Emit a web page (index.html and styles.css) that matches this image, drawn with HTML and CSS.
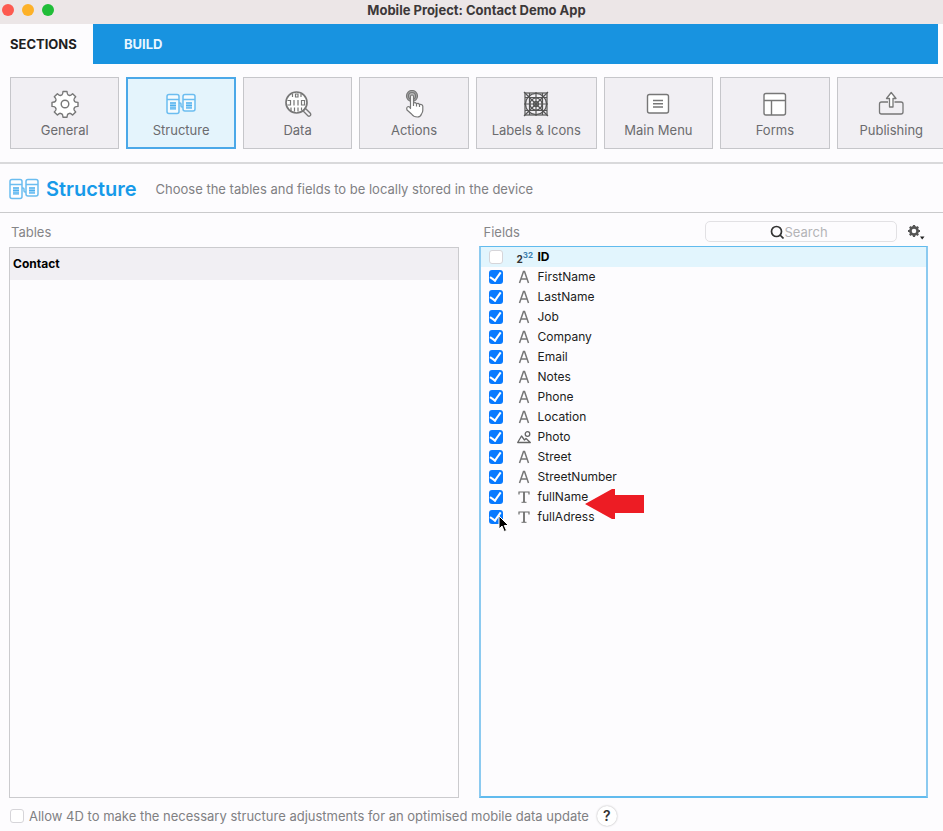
FILE: index.html
```html
<!DOCTYPE html>
<html lang="en">
<head>
<meta charset="utf-8">
<title>Mobile Project: Contact Demo App</title>
<link rel="stylesheet" href="styles.css">
</head>
<body>
<svg class="defs" aria-hidden="true">
  <symbol id="structure" viewBox="0 0 30 22">
    <g fill="#fff" fill-opacity=".6" stroke="#6bbdf0" stroke-width="1.5">
      <rect x="1" y="1.500" width="12" height="19" rx="2"/>
      <rect x="17" y="1.500" width="12" height="16.500" rx="2"/>
      <path d="M1 6.500h12M17 6.500h12M13 10h1q1 0 1 1v2q0 1 1 1h1" fill="none"/>
    </g>
    <path d="M4 9h6v8H4zM20 9h6v6.500h-6z" fill="#9bd3f6"/>
    <path d="M4 10h6M4 12.500h6M4 15h6M20 10h6M20 12.500h6M20 15h6" stroke="#4fb0ee" stroke-width="1"/>
  </symbol>
  <symbol id="letter" viewBox="0 0 14 14">
    <path d="M2.500 13 6.500 1.500h1L11.500 13M4 9h6" fill="none" stroke="#777" stroke-width="1.500"/>
  </symbol>
  <symbol id="text" viewBox="0 0 14 14">
    <path d="M2 4.500V2h10v2.500" fill="none" stroke="#6d6d6d" stroke-width="1.200"/>
    <path d="M7 2v10" stroke="#6d6d6d" stroke-width="1.800"/>
    <path d="M4.500 12.300h5" stroke="#6d6d6d"/>
  </symbol>
</svg>

<header class="titlebar">
  <span class="lights"><i class="light red"></i><i class="light amber"></i><i class="light green"></i></span>
  <h1>Mobile Project: Contact Demo App</h1>
</header>

<nav class="tabs">
  <button class="tab active">SECTIONS</button>
  <button class="tab build">BUILD</button>
</nav>

<nav class="toolbar">
  <button class="tool">
    <svg width="28" height="28" viewBox="0 0 28 28" fill="#fff" stroke="#777" stroke-width="1.400" stroke-linejoin="round"><path d="M12 1.500h4q.3 3 1 3.300l1.700.7q.7.300 2.900-1.800l3.100 3.100q-2.100 2.200-1.800 2.900l.7 1.700q.3.700 3.400 1v4q-3.100.3-3.400 1l-.7 1.700q-.3.700 1.800 2.900l-3.100 3.100q-2.200-2.100-2.900-1.800l-1.700.7q-.7.300-1 3.300h-4q-.3-3-1-3.300l-1.700-.7q-.7-.3-2.900 1.800l-3.100-3.100q2.100-2.200 1.800-2.900l-.7-1.700q-.3-.7-3.400-1v-4q3.100-.3 3.400-1l.7-1.700q.3-.7-1.800-2.900l3.100-3.100q2.200 2.100 2.900 1.800l1.700-.7q.7-.3 1-3.300z"/><circle cx="14" cy="14" r="3.800"/></svg>
    <span>General</span>
  </button>
  <button class="tool selected">
    <svg width="30" height="28" viewBox="0 -3 30 28"><use href="#structure" width="30" height="22"/></svg>
    <span>Structure</span>
  </button>
  <button class="tool">
    <svg width="28" height="28" viewBox="0 0 28 28" fill="none" stroke="#777" stroke-width="1.300"><circle cx="12.500" cy="12.500" r="10.500" fill="#fff" stroke-width="1.700"/><path d="m20 20 1.500-1.500 5 5q.7 1.500-.4 2.300t-2 .2l-5-5z"/><path d="M8.500 3.500v3.500M17 3.500v3.500M11.500 4h2.500v3h-2.500zM3.500 10.500h3V15h-3M10 10v5.500M14 10v5.500M17.500 10.500h3V15h-3zM7 17.500v3.500M10.500 17.500v4M14 17.500v4M17.500 17.500v3" stroke-width="1.200"/></svg>
    <span>Data</span>
  </button>
  <button class="tool">
    <svg width="28" height="28" viewBox="0 0 28 28" stroke="#777" stroke-width="1.200"><circle cx="12" cy="6" r="5.500" fill="#aaa"/><circle cx="12" cy="6" r="3.500" fill="#bbb"/><path d="M10.500 17V6.500a1.500 1.500 0 0 1 3 0V13q2-1 3 .8 2-1 3 .8 3-.7 3.300 1.700v4q0 2-1.300 3.700-1 3-4 3-4 0-6-3L7 20q-1-3 1.500-3.500 1 0 2 2z" fill="#fff" stroke-linejoin="round"/><path d="M13.500 13v3M16.500 14v2.500M19.500 15v2" fill="none"/></svg>
    <span>Actions</span>
  </button>
  <button class="tool">
    <svg width="28" height="28" viewBox="0 0 28 28" fill="none" stroke="#555" stroke-width="1.200"><rect x="3" y="3" width="22" height="22"/><path d="M7.500 3v22M14 2v24M20.500 3v22M3 7.500h22M2 14h24M3 20.500h22M2 2l24 24M26 2 2 26"/><circle cx="14" cy="14" r="10.500"/><circle cx="14" cy="14" r="6"/><circle cx="14" cy="14" r="2.500"/></svg>
    <span>Labels &amp; Icons</span>
  </button>
  <button class="tool">
    <svg width="28" height="28" viewBox="0 0 28 28" fill="#fff" stroke="#777" stroke-width="1.400"><rect x="3.500" y="4.500" width="21" height="18.500" rx="2"/><path d="M9 10.500h10M9 13.800h10M9 17h10"/></svg>
    <span>Main Menu</span>
  </button>
  <button class="tool">
    <svg width="28" height="28" viewBox="0 0 28 28" fill="#fff" stroke="#777" stroke-width="1.400"><rect x="3" y="3.500" width="21.500" height="21.500" rx="2"/><path d="M3 10.500h21.500M10.500 10.500V25"/></svg>
    <span>Forms</span>
  </button>
  <button class="tool">
    <svg width="28" height="28" viewBox="0 0 28 28" fill="none" stroke="#777" stroke-width="1.300" stroke-linejoin="round"><path d="M11 12H4.500q-2 0-2 2v8q0 2 2 2h19.500q2 0 2-2v-8q0-2-2-2h-6.500"/><path d="M12.500 17V8.500h-3L14.200 2.500 19 8.500h-3V17z" fill="#fff"/></svg>
    <span>Publishing</span>
  </button>
</nav>

<section class="heading">
  <svg width="30" height="22"><use href="#structure"/></svg>
  <h2>Structure</h2>
  <p>Choose the tables and fields to be locally stored in the device</p>
</section>

<main class="panels">
  <section class="column">
    <div class="column-head"><h3>Tables</h3></div>
    <ul class="list tables"><li class="table-row">Contact</li></ul>
  </section>
  <section class="column">
    <div class="column-head field-head">
      <h3>Fields</h3>
      <label class="search">
        <svg width="14" height="14" viewBox="0 0 14 14" fill="none" stroke="#333" stroke-width="1.700"><circle cx="6.500" cy="6.500" r="5"/><path d="m10 10 3.500 3.500"/></svg>
        <input type="text" placeholder="Search" aria-label="Search fields">
      </label>
      <button class="options" aria-label="Field options">
        <svg width="18" height="18" viewBox="0 0 18 18"><circle cx="7" cy="8" r="3.600" fill="none" stroke="#555" stroke-width="2.600"/><path d="M7 2v2M7 12v2M1 8h2M11 8h2M2.800 3.800l1.400 1.400M9.800 10.800l1.400 1.400M2.800 12.200l1.400-1.400M9.800 5.200l1.400-1.400" stroke="#555" stroke-width="2.200"/><path d="M13 13.500h4.500L15.200 16.500z" fill="#222"/></svg>
      </button>
    </div>
    <ul class="list fields">
      <li><label class="field current"><input type="checkbox"><span class="number">2<sup>32</sup></span>ID</label></li>
      <li><label class="field"><input type="checkbox" checked><svg class="kind"><use href="#letter"/></svg>FirstName</label></li>
      <li><label class="field"><input type="checkbox" checked><svg class="kind"><use href="#letter"/></svg>LastName</label></li>
      <li><label class="field"><input type="checkbox" checked><svg class="kind"><use href="#letter"/></svg>Job</label></li>
      <li><label class="field"><input type="checkbox" checked><svg class="kind"><use href="#letter"/></svg>Company</label></li>
      <li><label class="field"><input type="checkbox" checked><svg class="kind"><use href="#letter"/></svg>Email</label></li>
      <li><label class="field"><input type="checkbox" checked><svg class="kind"><use href="#letter"/></svg>Notes</label></li>
      <li><label class="field"><input type="checkbox" checked><svg class="kind"><use href="#letter"/></svg>Phone</label></li>
      <li><label class="field"><input type="checkbox" checked><svg class="kind"><use href="#letter"/></svg>Location</label></li>
      <li><label class="field"><input type="checkbox" checked><svg class="kind" viewBox="0 0 14 14" fill="none" stroke="#666" stroke-width="1.300" stroke-linejoin="round"><path d="M.7 12.500 4.500 6l3 4 1.500-1.500 4.300 4z"/><circle cx="10.500" cy="4" r="2.300"/></svg>Photo</label></li>
      <li><label class="field"><input type="checkbox" checked><svg class="kind"><use href="#letter"/></svg>Street</label></li>
      <li><label class="field"><input type="checkbox" checked><svg class="kind"><use href="#letter"/></svg>StreetNumber</label></li>
      <li><label class="field"><input type="checkbox" checked><svg class="kind"><use href="#text"/></svg>fullName</label>
        <svg class="arrow" width="60" height="32" viewBox="0 0 60 32"><path d="M0 16 27 1h3v6h29v18H30v6h-3z" fill="#ed1c24"/></svg></li>
      <li><label class="field"><input type="checkbox" checked><svg class="kind"><use href="#text"/></svg>fullAdress</label>
        <svg class="cursor" width="12" height="18" viewBox="0 0 12 18"><path d="M1 1v13l3-3 2.200 5.500 2.300-1L6.300 10.500H10.500z" fill="#000" stroke="#fff"/></svg></li>
    </ul>
  </section>
</main>

<footer class="footer">
  <label><input type="checkbox">Allow 4D to make the necessary structure adjustments for an optimised mobile data update</label>
  <button class="help" aria-label="Help">?</button>
</footer>
</body>
</html>
```
FILE: styles.css
```css
* { box-sizing: border-box; }
body {
  margin: 0;
  height: 100vh;
  min-height: 600px;
  display: flex;
  flex-direction: column;
  overflow: hidden;
  background: #fdfcfe;
  color: #1c1c1c;
  font: 13px/20px Inter, "Liberation Sans", sans-serif;
}
h1, h2, h3, p, ul { margin: 0; padding: 0; }
ul { list-style: none; }
button { font: inherit; border: 0; padding: 0; background: none; }
svg { flex: none; }
.defs { position: absolute; width: 0; height: 0; }

.titlebar {
  display: grid;
  grid-template-columns: 1fr auto 1fr;
  height: 24px;
  padding: 0 2px;
  background: #ece6e7;
}
.titlebar h1 { margin-left: 10px; font-size: 13px; font-weight: 700; color: #3c3839; }
.lights { display: flex; gap: 8px; padding-top: 4px; }
.light { width: 12px; height: 12px; border-radius: 50%; }
.red { background: #fd5a50; }
.amber { background: #fdb128; }
.green { background: #20bd38; }

.tabs { display: flex; height: 40px; margin-right: 5px; }
.tab { font-weight: 700; text-align: left; }
.tab.active { width: 93px; padding-left: 10px; color: #1f1f1f; }
.tab.build { flex: 1; padding-left: 31px; background: #1893e0; color: #e9f6ff; }

.toolbar {
  display: grid;
  grid-template-columns: repeat(4, 1fr) 121px repeat(3, 1fr);
  gap: 7px;
  margin-right: -3px;
  padding: 13px 0 13px 10px;
  border-bottom: 2px solid #d9d9db;
}
.tool {
  display: flex;
  flex-direction: column;
  align-items: center;
  height: 72px;
  padding-top: 12px;
  border: 1px solid #c6c6ca;
  background: #f1eff3;
  color: #6b6b6e;
}
.tool span { line-height: 24px; }
.tool.selected { padding-top: 11px; border: 2px solid #4ba8e8; background: #e4f4fc; }

.heading {
  display: flex;
  align-items: center;
  height: 49px;
  padding: 2px 0 0 9px;
  border-bottom: 1px solid #cacacc;
}
.heading h2 { margin: 0 19px 0 7px; font-size: 20px; font-weight: 600; color: #179ae9; }
.heading p { color: #808083; }

.panels {
  flex: 1;
  min-height: 0;
  display: grid;
  grid-template-columns: 1fr 1fr;
  gap: 20px;
  padding: 0 15px 0 9px;
}
.column { display: flex; flex-direction: column; min-height: 0; }
.column-head { display: flex; align-items: center; height: 34px; padding: 4px 0 0 2px; }
.field-head { height: 33px; padding-left: 5px; }
.column-head h3 { flex: 1; font-size: 13px; font-weight: 400; color: #858588; }
.list { flex: 1; border: 1px solid #cbcbce; font-size: 12px; }
.table-row { height: 32px; padding-left: 3px; line-height: 32px; font-weight: 700; color: #000; background: #f1eff3; }
.search {
  display: flex;
  justify-content: center;
  align-items: center;
  gap: 1px;
  width: 192px;
  height: 21px;
  margin-right: 10px;
  border: 1px solid #e2e1e4;
  border-radius: 5px;
}
.search input { width: 48px; padding: 0; border: 0; outline: 0; background: none; font: inherit; }
.search input::placeholder { color: #b4b4b7; }
.options { display: flex; margin-right: 3px; }

.fields { border: solid; border-width: 1px 2px 2px; border-color: #61bbee #8ccaf0 #61bbee; }
.fields li { position: relative; }
.field { display: flex; align-items: center; height: 20px; padding-left: 8px; }
.field.current { background: #e2f5fd; color: #000; font-weight: 700; }
input[type="checkbox"] {
  appearance: none;
  flex: none;
  width: 14px;
  height: 14px;
  margin: 0;
  border: 1px solid #d6d5d9;
  border-radius: 3px;
  background: #fff;
}
input[type="checkbox"]:checked { display: grid; place-items: center; border: 0; background: #087aff; }
input[type="checkbox"]:checked::before {
  content: "";
  width: 5px;
  height: 9px;
  margin-bottom: 3px;
  border: solid #fff;
  border-width: 0 2px 2px 0;
  transform: rotate(35deg);
}
.kind { width: 14px; height: 14px; margin: 0 7px 0 14px; }
.number { width: 16px; margin: 4px 5px 0 14px; font-size: 10px; line-height: 16px; white-space: nowrap; color: #333; }
.number sup { font-size: 8px; line-height: 0; vertical-align: 5px; color: #3c7fae; }
.arrow { position: absolute; left: 104px; top: 1px; z-index: 1; }
.cursor { position: absolute; left: 17px; top: 8px; }

.footer { display: flex; align-items: center; gap: 8px; height: 33px; padding: 3px 10px 0; color: #808083; }
.footer label { display: flex; align-items: center; gap: 5px; }
.help {
  width: 20px;
  height: 20px;
  border-radius: 50%;
  background: #fff;
  box-shadow: 0 0 2px #aaa;
  color: #333;
  font-size: 14px;
  font-weight: 600;
}
```
